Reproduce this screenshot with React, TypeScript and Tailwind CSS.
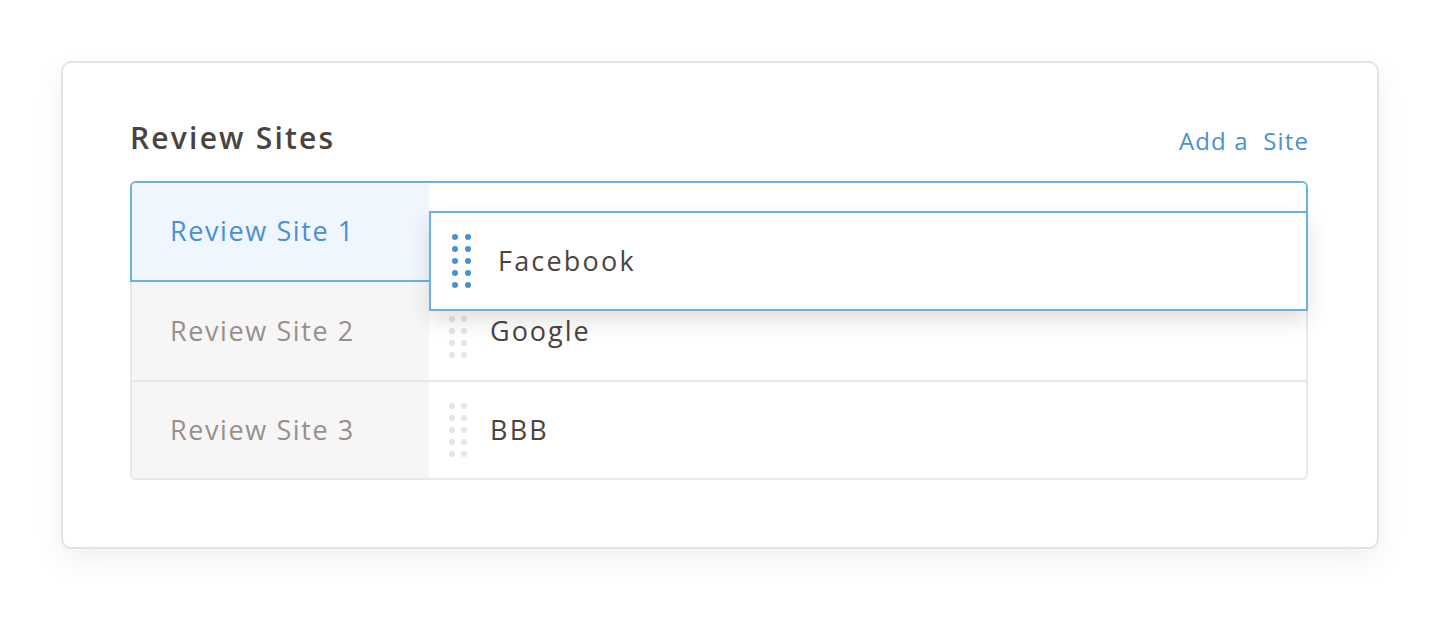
import React from "react";

function Dots({ color, gapX }: { color: string; gapX: string }) {
  const dots = Array.from({ length: 10 });
  return (
    <div className={`grid grid-cols-2 gap-y-[6px] ${gapX}`}>
      {dots.map((_, i) => (
        <span key={i} className={`block w-[6px] h-[6px] rounded-full ${color}`} />
      ))}
    </div>
  );
}

export default function App() {
  const font = { fontFamily: "'Open Sans', Lato, sans-serif" };
  return (
    <div className="w-[1440px] h-[620px] bg-white pt-[61px] pl-[61px]" style={font}>
      <div className="w-[1318px] h-[488px] bg-white border-2 border-[#e6e2de] rounded-[10px] shadow-[0_12px_30px_rgba(0,0,0,0.06)] pl-[67px] pr-[69px] pt-[53px]">
        <div className="flex items-end justify-between h-[40px] mb-[25px]">
          <h1 className="text-[30px] leading-[36px] font-semibold text-[#4a4440] tracking-[2.2px]">Review Sites</h1>
          <a className="text-[24px] leading-[30px] text-[#4a90d2] whitespace-pre tracking-[1.1px] -mr-[1px]">Add a  Site</a>
        </div>
        <div className="relative">
          <div className="flex h-[101px] border-2 border-[#6cb0e2] rounded-t-[6px] overflow-hidden">
            <div className="w-[297px] bg-[#eff6fe] flex items-center pl-[38px] text-[27px] text-[#4a90d2] tracking-[1.6px]">
              Review Site 1
            </div>
            <div className="flex-1 bg-white" />
          </div>
          <div className="flex h-[100px] border-x-2 border-b-2 border-[#ebe7e3]">
            <div className="w-[297px] bg-[#f6f6f6] flex items-center pl-[38px] text-[27px] text-[#9a8f8b] tracking-[1.6px]">
              Review Site 2
            </div>
            <div className="flex-1 bg-white flex items-center pl-[20px]">
              <Dots color="bg-[#e8e4e1]" gapX="gap-x-[6px]" />
              <span className="ml-[23px] text-[27px] text-[#4a4440] tracking-[2px]">Google</span>
            </div>
          </div>
          <div className="flex h-[98px] border-x-2 border-b-2 border-[#ebe7e3] rounded-b-[6px] overflow-hidden">
            <div className="w-[297px] bg-[#f6f6f6] flex items-center pl-[38px] text-[27px] text-[#9a8f8b] tracking-[1.6px]">
              Review Site 3
            </div>
            <div className="flex-1 bg-white flex items-center pl-[20px]">
              <Dots color="bg-[#e8e4e1]" gapX="gap-x-[6px]" />
              <span className="ml-[23px] text-[27px] text-[#4a4440] tracking-[2.2px]">BBB</span>
            </div>
          </div>
          <div className="absolute left-[299px] top-[30px] w-[879px] h-[100px] bg-white border-2 border-[#6cb0e2] shadow-[0_10px_20px_rgba(0,0,0,0.12)] flex items-center pl-[21px]">
            <Dots color="bg-[#4a90d2]" gapX="gap-x-[7px]" />
            <span className="ml-[27px] text-[27px] text-[#4a4440] tracking-[2.2px]">Facebook</span>
          </div>
        </div>
      </div>
    </div>
  );
}
